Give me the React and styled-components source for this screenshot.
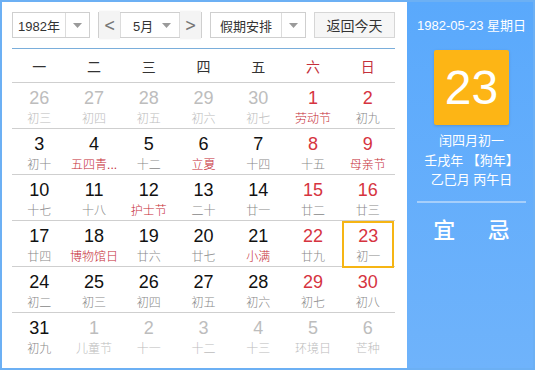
import React from "react";
import styled, { createGlobalStyle } from "styled-components";

const GlobalStyle = createGlobalStyle`
  html, body {
    margin: 0;
    padding: 0;
    background: #fff;
  }
  body {
    font-family: "Liberation Sans", "Noto Sans CJK SC", sans-serif;
  }
`;

const weekdays = ["一", "二", "三", "四", "五", "六", "日"];

// [day, lunar, festival?, dim?]
const rows = [
  [[26, "初三", 0, 1], [27, "初四", 0, 1], [28, "初五", 0, 1], [29, "初六", 0, 1], [30, "初七", 0, 1], [1, "劳动节", 1], [2, "初九"]],
  [[3, "初十"], [4, "五四青...", 1], [5, "十二"], [6, "立夏", 1], [7, "十四"], [8, "十五"], [9, "母亲节", 1]],
  [[10, "十七"], [11, "十八"], [12, "护士节", 1], [13, "二十"], [14, "廿一"], [15, "廿二"], [16, "廿三"]],
  [[17, "廿四"], [18, "博物馆日", 1], [19, "廿六"], [20, "廿七"], [21, "小满", 1], [22, "廿九"], [23, "初一"]],
  [[24, "初二"], [25, "初三"], [26, "初四"], [27, "初五"], [28, "初六"], [29, "初七"], [30, "初八"]],
  [[31, "初九"], [1, "儿童节", 0, 1], [2, "十一", 0, 1], [3, "十二", 0, 1], [4, "十三", 0, 1], [5, "环境日", 0, 1], [6, "芒种", 0, 1]],
];

const Caret = () => (
  <svg width="9" height="5" viewBox="0 0 9 5">
    <path d="M0 0 L9 0 L4.5 5 Z" fill="#9a9a9a" />
  </svg>
);

const App = () => {
  return (
    <>
      <GlobalStyle />
      <Widget>
        <Main>
          <Toolbar>
            <Select $w={78}>
              <SelectText>1982年</SelectText>
              <SelectArrow>
                <Caret />
              </SelectArrow>
            </Select>
            <MonthGroup>
              <NavButton>&lt;</NavButton>
              <MonthSelect>
                <span>5月</span>
                <Caret />
              </MonthSelect>
              <NavButton>&gt;</NavButton>
            </MonthGroup>
            <Select $w={96}>
              <SelectText>假期安排</SelectText>
              <SelectArrow>
                <Caret />
              </SelectArrow>
            </Select>
            <TodayButton>返回今天</TodayButton>
          </Toolbar>

          <WeekHeader>
            {weekdays.map((d, i) => (
              <WeekDay key={d} $weekend={i > 4}>
                {d}
              </WeekDay>
            ))}
          </WeekHeader>

          <Grid>
            {rows.map((row, r) => (
              <Row key={r} $last={r === rows.length - 1}>
                {row.map(([day, lunar, fest, dim], c) => (
                  <Cell key={c} $selected={r === 3 && c === 6}>
                    <DayNum $dim={dim} $weekend={c > 4}>
                      {day}
                    </DayNum>
                    <Lunar $dim={dim} $fest={fest}>
                      {lunar}
                    </Lunar>
                  </Cell>
                ))}
              </Row>
            ))}
          </Grid>
        </Main>

        <Side>
          <DateLine>1982-05-23 星期日</DateLine>
          <BigDay>23</BigDay>
          <LunarInfo>
            <div>闰四月初一</div>
            <div>壬戌年 【狗年】</div>
            <div>乙巳月 丙午日</div>
          </LunarInfo>
          <Divider />
          <YiJi>
            <span>宜</span>
            <span>忌</span>
          </YiJi>
        </Side>
      </Widget>
    </>
  );
};

const Widget = styled.div`
  width: 535px;
  height: 370px;
  box-sizing: border-box;
  border: 2px solid #6cb0f4;
  display: flex;
  overflow: hidden;
`;

const Main = styled.div`
  width: 405px;
  box-sizing: border-box;
  padding: 10px 12px 0 10px;
  background: #fff;
`;

const Toolbar = styled.div`
  display: flex;
  gap: 8px;
  height: 26px;
  padding-bottom: 10px;
  border-bottom: 1px solid #7aaedb;
`;

const Select = styled.div`
  width: ${(p) => p.$w}px;
  height: 26px;
  box-sizing: border-box;
  border: 1px solid #cfcfcf;
  display: flex;
  background: #fff;
`;

const SelectText = styled.div`
  flex: 1;
  display: flex;
  align-items: center;
  justify-content: center;
  font-size: 13px;
  color: #333;
  border-right: 1px solid #dcdcdc;
`;

const SelectArrow = styled.div`
  width: 23px;
  display: flex;
  align-items: center;
  justify-content: center;
`;

const MonthGroup = styled.div`
  width: 104px;
  height: 26px;
  box-sizing: border-box;
  border: 1px solid #cfcfcf;
  display: flex;
`;

const NavButton = styled.div`
  width: 21px;
  display: flex;
  align-items: center;
  justify-content: center;
  background: #f4f4f4;
  color: #777;
  font-size: 14px;
  font-family: "DejaVu Sans", sans-serif;
  transform: scaleY(1.2);
`;

const MonthSelect = styled.div`
  flex: 1;
  display: flex;
  align-items: center;
  justify-content: space-between;
  padding: 0 8px 0 12px;
  font-size: 13px;
  color: #333;
  border-left: 1px solid #dcdcdc;
  border-right: 1px solid #dcdcdc;
  background: #fff;
`;

const TodayButton = styled.div`
  width: 81px;
  height: 26px;
  box-sizing: border-box;
  border: 1px solid #d6d6d6;
  background: #f6f6f6;
  display: flex;
  align-items: center;
  justify-content: center;
  font-size: 14px;
  color: #333;
`;

const WeekHeader = styled.div`
  display: grid;
  grid-template-columns: repeat(7, 1fr);
  height: 33px;
  border-bottom: 1px solid #cfcfcf;
`;

const WeekDay = styled.div`
  display: flex;
  align-items: center;
  justify-content: center;
  font-size: 14px;
  color: ${(p) => (p.$weekend ? "#c4303c" : "#333")};
`;

const Grid = styled.div`
  display: flex;
  flex-direction: column;
`;

const Row = styled.div`
  display: grid;
  grid-template-columns: repeat(7, 1fr);
  height: 46px;
  border-bottom: ${(p) => (p.$last ? "none" : "1px solid #cfcfcf")};
  box-sizing: border-box;
`;

const Cell = styled.div`
  display: flex;
  flex-direction: column;
  align-items: center;
  box-sizing: border-box;
  padding-top: ${(p) => (p.$selected ? "3px" : "5px")};
  border: ${(p) => (p.$selected ? "2px solid #f6b514" : "none")};
  margin: ${(p) => (p.$selected ? "0 1px -2px 2px" : "0")};
  position: relative;
`;

const DayNum = styled.div`
  font-size: 18px;
  line-height: 20px;
  color: ${(p) => (p.$dim ? "#bdbdbd" : p.$weekend ? "#d6343f" : "#111")};
`;

const Lunar = styled.div`
  margin-top: 3px;
  font-size: 12px;
  line-height: 16px;
  font-weight: 300;
  white-space: nowrap;
  color: ${(p) => (p.$dim ? "#bdbdbd" : p.$fest ? "#c52a35" : "#888")};
`;

const Side = styled.div`
  flex: 1;
  background: linear-gradient(180deg, #5aa9fc 0%, #6fb3fb 100%);
  display: flex;
  flex-direction: column;
  align-items: center;
  padding: 0 8px 0 10px;
  color: #fff;
`;

const DateLine = styled.div`
  margin-top: 15px;
  font-size: 13px;
  line-height: 18px;
  white-space: nowrap;
`;

const BigDay = styled.div`
  margin-top: 15px;
  width: 75px;
  height: 75px;
  background: #fdb515;
  border-radius: 2px;
  box-shadow: 0 1px 3px rgba(0, 0, 0, 0.15);
  display: flex;
  align-items: center;
  justify-content: center;
  font-size: 48px;
  color: #fff;
`;

const LunarInfo = styled.div`
  margin-top: 6px;
  font-size: 13px;
  line-height: 19.5px;
  text-align: center;
`;

const Divider = styled.div`
  align-self: stretch;
  height: 2px;
  margin-top: 11px;
  background: #a6cffb;
`;

const YiJi = styled.div`
  align-self: stretch;
  display: flex;
  margin-top: 15px;

  span {
    flex: 1;
    text-align: center;
    font-size: 22px;
    font-weight: 500;
    line-height: 26px;
  }
`;

export default App;
